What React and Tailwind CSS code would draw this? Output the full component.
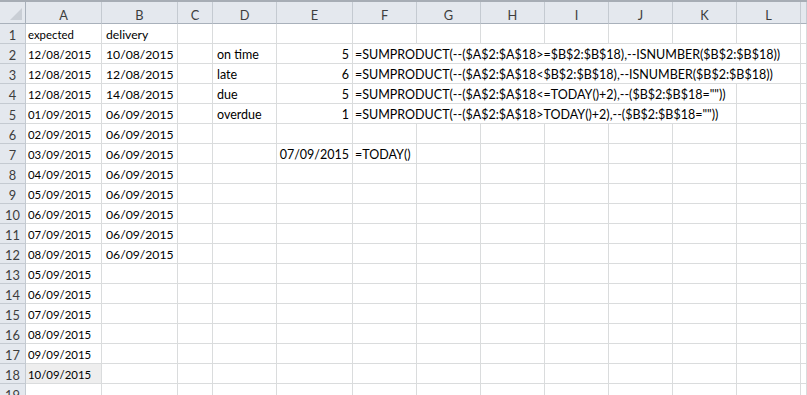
import React from "react";

const COLS = "grid grid-cols-[26px_76px_76px_35px_64px_76px_64px_64px_64px_64px_64px_64px_64px_6px]";
const LETTERS = ["A", "B", "C", "D", "E", "F", "G", "H", "I", "J", "K", "L", ""];

const colA = [
  "expected", "12/08/2015", "12/08/2015", "12/08/2015", "01/09/2015", "02/09/2015", "03/09/2015",
  "04/09/2015", "05/09/2015", "06/09/2015", "07/09/2015", "08/09/2015", "05/09/2015", "06/09/2015",
  "07/09/2015", "08/09/2015", "09/09/2015", "10/09/2015", "",
];
const colB = [
  "delivery", "10/08/2015", "12/08/2015", "14/08/2015", "06/09/2015", "06/09/2015", "06/09/2015",
  "06/09/2015", "06/09/2015", "06/09/2015", "06/09/2015", "06/09/2015", "", "", "", "", "", "", "",
];
const colD = { 2: "on time", 3: "late", 4: "due", 5: "overdue" };
const colE = { 2: "5", 3: "6", 4: "5", 5: "1", 7: "07/09/2015" };
const colF = {
  2: "=SUMPRODUCT(--($A$2:$A$18>=$B$2:$B$18),--ISNUMBER($B$2:$B$18))",
  3: "=SUMPRODUCT(--($A$2:$A$18<$B$2:$B$18),--ISNUMBER($B$2:$B$18))",
  4: '=SUMPRODUCT(--($A$2:$A$18<=TODAY()+2),--($B$2:$B$18=""))',
  5: '=SUMPRODUCT(--($A$2:$A$18>TODAY()+2),--($B$2:$B$18=""))',
  7: "=TODAY()",
};

function Cell({ children, className = "", size = "text-[12.5px]" }) {
  return (
    <div
      className={
        "h-[20px] border-r border-b border-[#dadcdd] flex items-end whitespace-nowrap overflow-visible leading-[16px] text-black " +
        size +
        " " +
        className
      }
    >
      {children}
    </div>
  );
}

function Row({ n }) {
  const i = n - 1;
  const fSpan = n === 2 || n === 3 ? 7 : n === 4 || n === 5 ? 6 : 1;
  const rest = [];
  if (fSpan === 7) {
    rest.push(
      <Cell key="f" className="col-span-7 pl-[2px]">{colF[n]}</Cell>
    );
  } else if (fSpan === 6) {
    rest.push(
      <Cell key="f" className="col-span-6 pl-[2px]">{colF[n]}</Cell>
    );
    rest.push(<Cell key="l" />);
  } else {
    rest.push(
      <Cell key="f" className="pl-[2px]">{colF[n] || ""}</Cell>
    );
    for (let k = 0; k < 6; k++) rest.push(<Cell key={"e" + k} />);
  }
  return (
    <div className={COLS}>
      <div className="h-[20px] bg-[#e4e8ee] border-r border-b border-[#c4cad1] flex items-end justify-center leading-[16px] text-[12.8px] text-[#3d3d3d]">
        {n}
      </div>
      <Cell size="text-[11.4px]" className={"pl-[2px] " + (n === 18 ? "bg-[#eeeeee]" : "")}>{colA[i]}</Cell>
      <Cell size="text-[12.2px]" className="pl-[4px]">{colB[i]}</Cell>
      <Cell />
      <Cell className="pl-[4px]">{colD[n] || ""}</Cell>
      <Cell className="justify-end pr-[3px]">{colE[n] || ""}</Cell>
      {rest}
      <Cell />
    </div>
  );
}

export default function App() {
  const rows = [];
  for (let n = 1; n <= 19; n++) rows.push(<Row key={n} n={n} />);
  return (
    <div
      className="w-[807px] h-[395px] overflow-hidden bg-white"
      style={{ fontFamily: "Lato, 'Open Sans', sans-serif" }}
    >
      <div className="h-[2px] bg-[#a7adb5]" />
      <div className={COLS}>
        <div className="h-[22px] bg-[#e4e8ee] border-r border-b border-[#a9b1bb] relative">
          <svg className="absolute right-[3px] bottom-[3px]" width="12" height="12" viewBox="0 0 12 12">
            <polygon points="12,0 12,12 0,12" fill="#c9ced5" />
          </svg>
        </div>
        {LETTERS.map((l, idx) => (
          <div
            key={idx}
            className="h-[22px] bg-[#e4e8ee] border-r border-b border-[#c4cad1] border-b-[#a9b1bb] flex items-end justify-center leading-[16px] text-[12.8px] text-[#3d3d3d]"
          >
            {l}
          </div>
        ))}
      </div>
      {rows}
    </div>
  );
}
